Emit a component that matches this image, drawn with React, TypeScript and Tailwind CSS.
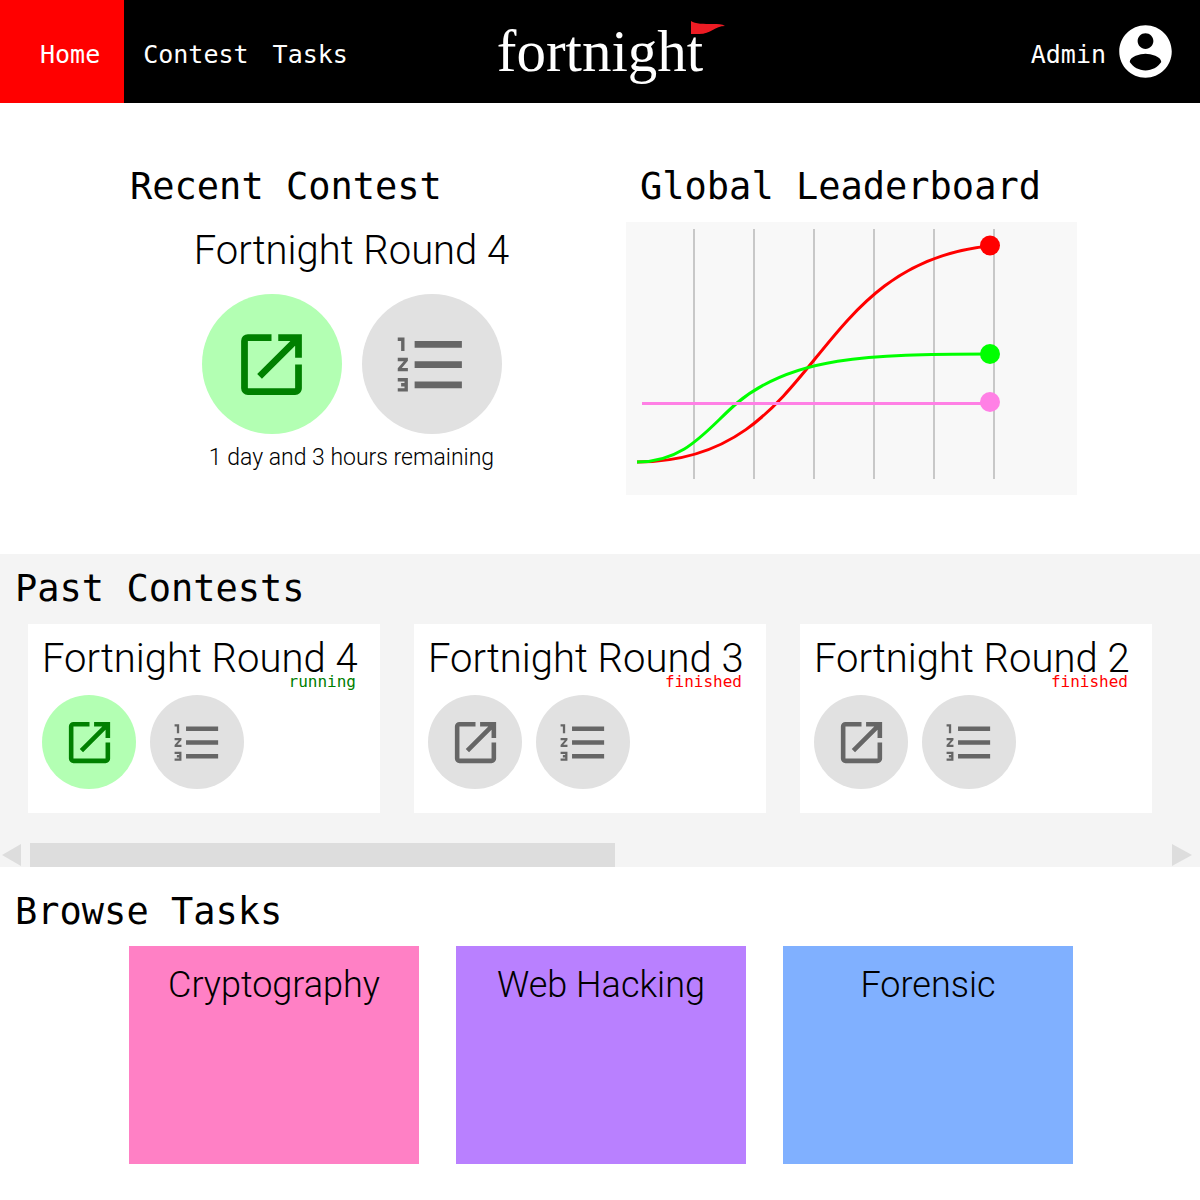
import React from "react";
import { MdFormatListNumbered, MdOpenInNew } from "react-icons/md";

const mono = "font-['DejaVu_Sans_Mono',monospace]";
const sans = "font-['Roboto',sans-serif] font-light";

type Contest = { name: string; status: "running" | "finished" };

const contests: Contest[] = [
  { name: "Fortnight Round 4", status: "running" },
  { name: "Fortnight Round 3", status: "finished" },
  { name: "Fortnight Round 2", status: "finished" },
];

const tasks = [
  { name: "Cryptography", color: "bg-[#ff80c5]" },
  { name: "Web Hacking", color: "bg-[#b980ff]" },
  { name: "Forensic", color: "bg-[#80b0ff]" },
];

function Heading({ children }: { children: React.ReactNode }) {
  return <h2 className={`${mono} text-[37px] leading-12 whitespace-nowrap`}>{children}</h2>;
}

function AccountIcon() {
  return (
    <svg viewBox="0 0 24 24" className="size-[63px]" fill="currentColor" aria-hidden="true">
      <path d="M12 2C6.48 2 2 6.48 2 12s4.48 10 10 10 10-4.48 10-10S17.52 2 12 2zm0 3c1.66 0 3 1.34 3 3s-1.34 3-3 3-3-1.34-3-3 1.34-3 3-3zm0 14.2c-2.5 0-4.71-1.28-6-3.22.03-1.99 4-3.08 6-3.08 1.99 0 5.97 1.09 6 3.08-1.29 1.94-3.5 3.22-6 3.22z" />
    </svg>
  );
}

function ContestActions({ active, large }: { active: boolean; large?: boolean }) {
  const circle = large ? "size-[140px]" : "size-[94px]";
  const icon = large ? "size-[81px]" : "size-[55px]";
  return (
    <div className={`flex ${large ? "gap-5" : "gap-3.5"}`}>
      <button
        type="button"
        aria-label="Open contest"
        className={`flex items-center justify-center rounded-full ${circle} ${
          active ? "bg-[#b3ffb3] text-[#008000]" : "bg-[#e1e1e1] text-[#666666]"
        }`}
      >
        <MdOpenInNew className={icon} />
      </button>
      <button
        type="button"
        aria-label="Show ranking"
        className={`flex items-center justify-center rounded-full bg-[#e1e1e1] text-[#666666] ${circle}`}
      >
        <MdFormatListNumbered className={icon} />
      </button>
    </div>
  );
}

function Header() {
  return (
    <header className="grid h-[103px] grid-cols-[1fr_auto_1fr] bg-black text-white">
      <nav className={`${mono} flex items-stretch text-[25px] leading-8`}>
        <a href="#home" className="flex items-center bg-[#ff0000] pt-1.5 pr-6 pl-10">
          Home
        </a>
        <a href="#contest" className="flex items-center pt-1.5 pr-3 pl-[19px]">
          Contest
        </a>
        <a href="#tasks" className="flex items-center px-3 pt-1.5">
          Tasks
        </a>
      </nav>
      <a
        href="#home"
        className="relative self-center pb-0.5 font-['Liberation_Serif',serif] text-[59px] leading-16"
      >
        fortnight
        <svg
          viewBox="0 0 34 14"
          className="absolute top-0.5 -right-[22px] h-3.5 w-[34px]"
          fill="#ed1c24"
          aria-hidden="true"
        >
          <path d="M0 0C4 3 13 3 22 3C27 3 31 3 34 5C24 5 20 13 8 13H0Z" />
        </svg>
      </a>
      <a
        href="#account"
        className={`${mono} flex items-center justify-end gap-2 pr-[23px] text-[25px] leading-8`}
      >
        <span className="pt-1.5">Admin</span>
        <AccountIcon />
      </a>
    </header>
  );
}

function LeaderboardChart() {
  return (
    <svg
      viewBox="0 0 451 273"
      className="mt-[11px] block w-full bg-[#f8f8f8]"
      fill="none"
      role="img"
      aria-label="Global leaderboard scores"
    >
      <path
        d="M68 7V257M128 7V257M188 7V257M248 7V257M308 7V257M368 7V257"
        stroke="#c8c8c8"
        strokeWidth="2"
      />
      <path d="M11 240C196 240 179 42 364 24" stroke="#ff0000" strokeWidth="3" />
      <path d="M11 240C60 240 81 207 111 181C166 135 240 132 364 132" stroke="#00ff00" strokeWidth="3" />
      <path d="M16 181.5H364" stroke="#ff80e5" strokeWidth="3" />
      <circle cx="364" cy="23.5" r="10" fill="#ff0000" />
      <circle cx="364" cy="132" r="10" fill="#00ff00" />
      <circle cx="364" cy="180" r="10" fill="#ff80e5" />
    </svg>
  );
}

function ContestCard({ contest }: { contest: Contest }) {
  const running = contest.status === "running";
  return (
    <article className="w-[352px] shrink-0 bg-white px-3.5 pt-[17px] pb-6">
      <h3 className={`${sans} text-[40px] leading-9 whitespace-nowrap`}>{contest.name}</h3>
      <p
        className={`${mono} mb-2 pr-2.5 text-right text-base leading-2.5 ${
          running ? "text-[#008000]" : "text-[#ff0000]"
        }`}
      >
        {contest.status}
      </p>
      <ContestActions active={running} />
    </article>
  );
}

function Scrollbar() {
  return (
    <div className="mt-[30px] flex h-6 items-stretch text-[#dddddd]">
      <button type="button" aria-label="Scroll left" className="w-[30px] shrink-0 pl-0.5">
        <svg viewBox="0 0 20 24" className="h-6 w-5" fill="currentColor" aria-hidden="true">
          <path d="M0 12L19 1V23Z" />
        </svg>
      </button>
      <div className="flex-1">
        <div className="h-full w-41/80 bg-[#dddddd]" />
      </div>
      <button type="button" aria-label="Scroll right" className="w-7 shrink-0">
        <svg viewBox="0 0 20 24" className="h-6 w-5" fill="currentColor" aria-hidden="true">
          <path d="M20 12L0 1V23Z" />
        </svg>
      </button>
    </div>
  );
}

export default function App() {
  return (
    <div className="min-h-screen bg-white text-black">
      <Header />
      <main>
        <section className="grid grid-cols-2 gap-[49px] pt-[60px] pr-[123px] pb-[59px] pl-[126px]">
          <div>
            <div className="pl-1">
              <Heading>Recent Contest</Heading>
            </div>
            <div className={`${sans} mt-4 flex flex-col items-center`}>
              <h3 className="mb-[19px] text-[40px] leading-12 whitespace-nowrap">
                Fortnight Round 4
              </h3>
              <ContestActions active large />
              <p className="mt-2 text-[23px] leading-8 whitespace-nowrap">
                1 day and 3 hours remaining
              </p>
            </div>
          </div>
          <div>
            <div className="pl-3.5">
              <Heading>Global Leaderboard</Heading>
            </div>
            <LeaderboardChart />
          </div>
        </section>

        <section className="bg-[#f4f4f4] pt-[11px]">
          <div className="pl-[15px]">
            <Heading>Past Contests</Heading>
          </div>
          <div className="mt-[11px] flex gap-[34px] overflow-x-auto pl-7">
            {contests.map((contest) => (
              <ContestCard key={contest.name} contest={contest} />
            ))}
          </div>
          <Scrollbar />
        </section>

        <section className="pt-[21px] pb-9">
          <div className="pl-[15px]">
            <Heading>Browse Tasks</Heading>
          </div>
          <div className="mt-2.5 grid grid-cols-3 gap-[37px] pr-[127px] pl-[129px]">
            {tasks.map((task) => (
              <a
                key={task.name}
                href="#tasks"
                className={`${sans} ${task.color} min-h-[218px] pt-[19px] text-center text-4xl`}
              >
                {task.name}
              </a>
            ))}
          </div>
        </section>
      </main>
    </div>
  );
}
